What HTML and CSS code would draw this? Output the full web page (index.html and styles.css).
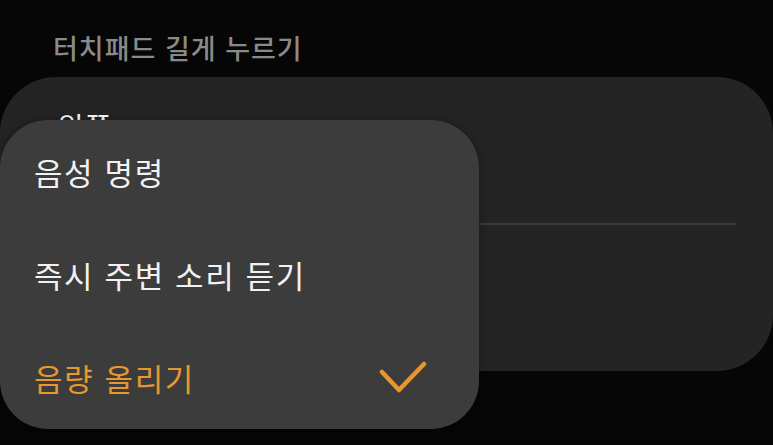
FILE: index.html
```html
<html lang="ko">
<head>
<meta charset="UTF-8">
<meta name="viewport" content="width=device-width, initial-scale=1.0">
<title>터치패드 길게 누르기</title>
<link rel="stylesheet" href="styles.css">
</head>
<body>
<div class="screen">
  <h2 class="section-title">터치패드 길게 누르기</h2>
  <div class="card">
    <div class="card-row">
      <div class="row-title">왼쪽</div>
    </div>
    <div class="divider"></div>
    <div class="card-row"></div>
  </div>

  <ul class="popup-menu">
    <li class="menu-item">음성 명령</li>
    <li class="menu-item">즉시 주변 소리 듣기</li>
    <li class="menu-item selected">
      <span>음량 올리기</span>
      <svg class="check" width="48" height="34" viewBox="0 0 48 34">
        <path d="M3 11 L20 29 L45 3" fill="none" stroke="#e8962e" stroke-width="4.5" stroke-linecap="round" stroke-linejoin="round"/>
      </svg>
    </li>
  </ul>
</div>
</body>
</html>
```

FILE: styles.css
```css
body {
  font-family: "Noto Sans CJK KR", "Noto Sans", sans-serif;
  background-color: #060606;
  margin: 0;
  padding: 0;
  overflow: hidden;
}

.screen {
  position: relative;
  width: 773px;
  height: 445px;
}

.section-title {
  margin: 0;
  padding: 30px 0 0 53px;
  font-size: 27px;
  font-weight: 500;
  line-height: 36px;
  letter-spacing: 1px;
  color: #8a8a8a;
}

.card {
  margin-top: 11px;
  height: 294px;
  background-color: #242424;
  border-radius: 56px;
  padding: 0 37px 0 57px;
  box-sizing: border-box;
}

.card-row {
  height: 147px;
  padding-top: 31px;
  box-sizing: border-box;
}

.row-title {
  font-size: 29px;
  line-height: 36px;
  letter-spacing: 1px;
  color: #fff;
}

.divider {
  height: 2px;
  margin-top: -1px;
  background-color: #3a3a3a;
}

/* menu that lies over the card */
.popup-menu {
  position: absolute;
  left: 0;
  top: 120px;
  width: 479px;
  margin: 0;
  padding: 0;
  list-style: none;
  background-color: #3c3c3c;
  border-radius: 48px;
  box-shadow: 0 0 8px rgba(0, 0, 0, 0.35);
}

.menu-item {
  height: 103px;
  display: flex;
  align-items: center;
  justify-content: space-between;
  padding: 0 52px 0 34px;
  font-size: 31px;
  letter-spacing: 1.6px;
  color: #f2f2f2;
}

.menu-item.selected {
  color: #e8962e;
}

.check {
  display: block;
}
```
